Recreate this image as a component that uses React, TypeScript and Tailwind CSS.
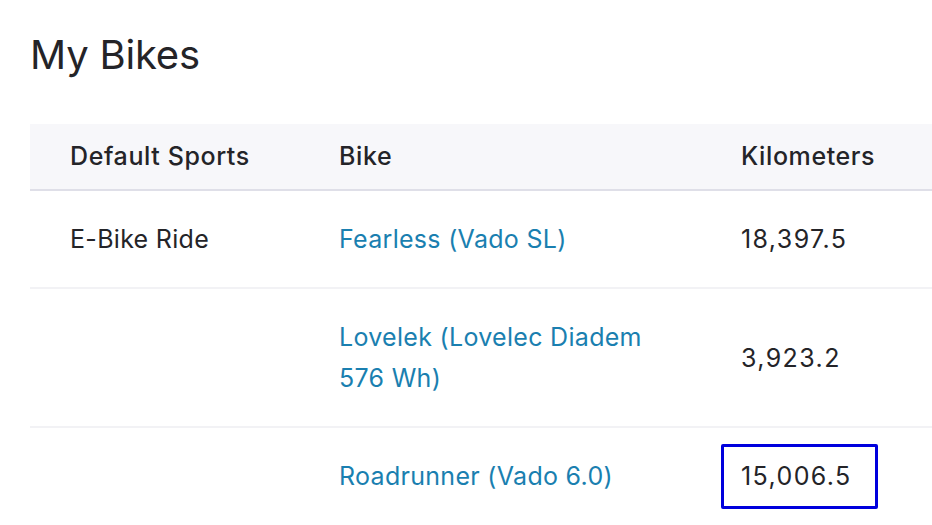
import React from "react";

type BikeRow = {
  sport: string;
  bike: string;
  km: string;
  highlight?: boolean;
};

const rows: BikeRow[] = [
  { sport: "E-Bike Ride", bike: "Fearless (Vado SL)", km: "18,397.5" },
  { sport: "", bike: "Lovelek (Lovelec Diadem 576 Wh)", km: "3,923.2" },
  { sport: "", bike: "Roadrunner (Vado 6.0)", km: "15,006.5", highlight: true },
];

const App: React.FC = () => {
  return (
    <div
      className="min-h-[525px] bg-white pl-[30px] pt-[27px] text-[#242428] overflow-hidden"
      style={{ fontFamily: "Inter, 'Noto Sans', sans-serif" }}
    >
      <h1 className="text-[40px] leading-[56px] font-normal tracking-[-0.2px] mb-[41px]">
        My Bikes
      </h1>

      <table className="w-[902px] table-fixed border-collapse text-[25px] leading-[41px] tracking-[0.3px]">
        <colgroup>
          <col className="w-[269px]" />
          <col className="w-[402px]" />
          <col />
        </colgroup>
        <thead>
          <tr className="bg-[#f7f7fa] border-b-2 border-[#dfdfe8]">
            <th className="text-left font-medium tracking-[0.6px] pl-[40px] pr-[30px] py-[12px]">
              Default Sports
            </th>
            <th className="text-left font-medium tracking-[0.6px] pl-[40px] pr-[30px] py-[12px]">
              Bike
            </th>
            <th className="text-left font-medium tracking-[0.6px] pl-[40px] pr-[30px] py-[12px]">
              Kilometers
            </th>
          </tr>
        </thead>
        <tbody>
          {rows.map((r) => (
            <tr key={r.bike} className="border-b-2 border-[#f2f2f5] last:border-b-0">
              <td className="pl-[40px] pr-[30px] pt-[28px] pb-[27px] align-middle">{r.sport}</td>
              <td className="pl-[40px] pr-[30px] pt-[28px] pb-[27px] align-middle">
                <a href="#" className="text-[#1a7fb0]">
                  {r.bike}
                </a>
              </td>
              <td className="pl-[40px] pr-[30px] pt-[28px] pb-[27px] align-middle tracking-[1.4px]">
                {r.highlight ? (
                  <span className="relative inline-block">
                    {r.km}
                    <span className="absolute -left-[20px] -right-[26px] -top-[12px] -bottom-[12px] border-[3px] border-[#0000dd] rounded-[2px]" />
                  </span>
                ) : (
                  r.km
                )}
              </td>
            </tr>
          ))}
        </tbody>
      </table>
    </div>
  );
};

export default App;
